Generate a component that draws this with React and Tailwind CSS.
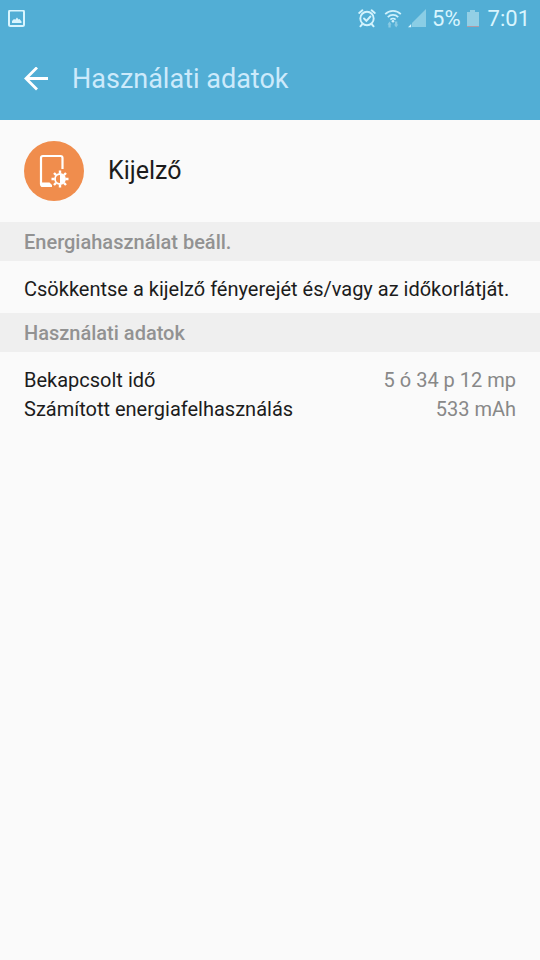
import React from 'react';

const USAGE_ROWS = [
  { label: 'Bekapcsolt idő', value: '5 ó 34 p 12 mp' },
  { label: 'Számított energiafelhasználás', value: '533 mAh' },
];

function ScreenshotIcon() {
  return (
    <svg width="18" height="18" viewBox="0 0 18 18" fill="none" aria-hidden="true">
      <rect x="1" y="0.5" width="15" height="15.500" rx="1.500" stroke="#d9f5fe" strokeWidth="2" />
      <path d="M4 13v-2l2-2 1.200.8L9 7.500l1.500 2 1-.5 2 2.500V13z" fill="#d9f5fe" />
      <path d="M2 15h13v1.500H2z" fill="#d9f5fe" />
    </svg>
  );
}

function AlarmIcon() {
  return (
    <svg width="18" height="20" viewBox="0 0 18 20" fill="none" stroke="#d3f3fd" strokeWidth="1.900" strokeLinecap="round" aria-hidden="true">
      <circle cx="9" cy="9.500" r="6.700" />
      <path d="M1.200 4L4.400 1.300M16.800 4L13.600 1.300M4 15.500l-1.600 1.800M14 15.500l1.600 1.800" />
      <path d="M6 9.500l2.400 2.300 4-4.300" />
    </svg>
  );
}

function WifiIcon() {
  return (
    <svg width="18" height="20" viewBox="0 0 18 20" fill="none" aria-hidden="true">
      <path
        d="M1.200 5.200a10.800 10.800 0 0 1 15.600 0M3.800 8.100a7.200 7.200 0 0 1 10.400 0M6.400 10.700a3.700 3.700 0 0 1 5.200 0"
        stroke="#cff1fc"
        strokeWidth="1.700"
      />
      <circle cx="9" cy="12.300" r="1.300" fill="#cff1fc" />
      <path d="M3.500 15.500L5.500 12.500l2 3H6.700V18.500H4.400v-3zM10 15.500h1V12.500h2.300v3h1L12.200 18.500z" fill="#89cae3" />
    </svg>
  );
}

function SignalIcon() {
  return (
    <svg width="20" height="20" viewBox="0 0 20 20" aria-hidden="true">
      <path d="M19 0v18H5V14z" fill="#8acde5" />
      <path d="M1 18.300L4.200 15v3.300z" fill="#d9f5fe" />
    </svg>
  );
}

function BatteryIcon() {
  return (
    <svg width="14" height="20" viewBox="0 0 14 20" aria-hidden="true">
      <path d="M4 1h5v2h4v15H1V3h3z" fill="#93cfe5" />
      <path d="M1 17h12v1H1z" fill="#b19aa4" />
    </svg>
  );
}

function BackIcon() {
  return (
    <svg width="24" height="24" viewBox="0 0 24 24" fill="none" stroke="#fff" strokeWidth="2.800" aria-hidden="true">
      <path d="M13 0.500L2 11.500l11 11M2 11.500h22" />
    </svg>
  );
}

function DisplayIcon() {
  return (
    <svg className="shrink-0" width="60" height="60" viewBox="0 0 60 60" fill="none" aria-hidden="true">
      <circle cx="30" cy="30" r="30" fill="#f08d4d" />
      <path
        d="M38.500 28V17a2 2 0 0 0-2-2H19a2 2 0 0 0-2 2v26a2 2 0 0 0 2 2h9"
        stroke="#fff"
        strokeWidth="2.200"
      />
      <path d="M17 41.500h8.500l2.500 2.500v2H19a2 2 0 0 1-2-2z" fill="#fff" />
      <circle cx="36" cy="38" r="5" stroke="#fff" strokeWidth="1.800" />
      <path d="M36 33a5 5 0 0 1 0 10z" fill="#fff" />
      <path
        d="M36 32.500v-3M36 43.500v3M30.500 38h-3M41.500 38h3M32.100 34.100l-2.100-2.100M39.900 41.900l2.100 2.100M32.100 41.900l-2.100 2.100M39.900 34.100l2.100-2.100"
        stroke="#fff"
        strokeWidth="2.400"
      />
    </svg>
  );
}

function StatusBar() {
  return (
    <div className="flex h-[38px] items-center justify-between pr-[10px] pl-2 text-[22px] leading-6 text-[#d9f5fe]">
      <ScreenshotIcon />
      <div className="flex items-center gap-2">
        <div className="flex items-center gap-[5px]">
          <div className="flex items-center gap-2">
            <AlarmIcon />
            <WifiIcon />
          </div>
          <SignalIcon />
          <span>5%</span>
          <BatteryIcon />
        </div>
        <span>7:01</span>
      </div>
    </div>
  );
}

function SectionTitle({ children }) {
  return (
    <h2 className="bg-[#efefef] px-6 pt-[6px] pb-[5px] text-[20px] leading-7 font-medium text-[#929292]">
      {children}
    </h2>
  );
}

export default function App() {
  return (
    <div className="min-h-screen bg-[#fafafa] font-['Roboto',sans-serif] text-[#1c1c1c]">
      <header className="bg-[#52aed5]">
        <StatusBar />
        <div className="flex h-[82px] items-center gap-6 px-6">
          <button type="button" aria-label="Vissza">
            <BackIcon />
          </button>
          <h1 className="text-[27px] leading-8 text-[#cdeafb]">Használati adatok</h1>
        </div>
      </header>

      <main>
        <div className="flex items-center gap-6 px-6 py-[21px]">
          <DisplayIcon />
          <p className="text-[25px] leading-8">Kijelző</p>
        </div>

        <SectionTitle>Energiahasználat beáll.</SectionTitle>
        <p className="px-6 pt-[14px] pb-[10px] text-[20px] leading-7">
          Csökkentse a kijelző fényerejét és/vagy az időkorlátját.
        </p>

        <SectionTitle>Használati adatok</SectionTitle>
        <div className="px-6 py-[14px]">
          <table className="w-full text-[20px] leading-[29px]">
            <tbody>
              {USAGE_ROWS.map((row) => (
                <tr key={row.label}>
                  <th scope="row" className="text-left font-normal">{row.label}</th>
                  <td className="text-right text-[#888888]">{row.value}</td>
                </tr>
              ))}
            </tbody>
          </table>
        </div>
      </main>
    </div>
  );
}
